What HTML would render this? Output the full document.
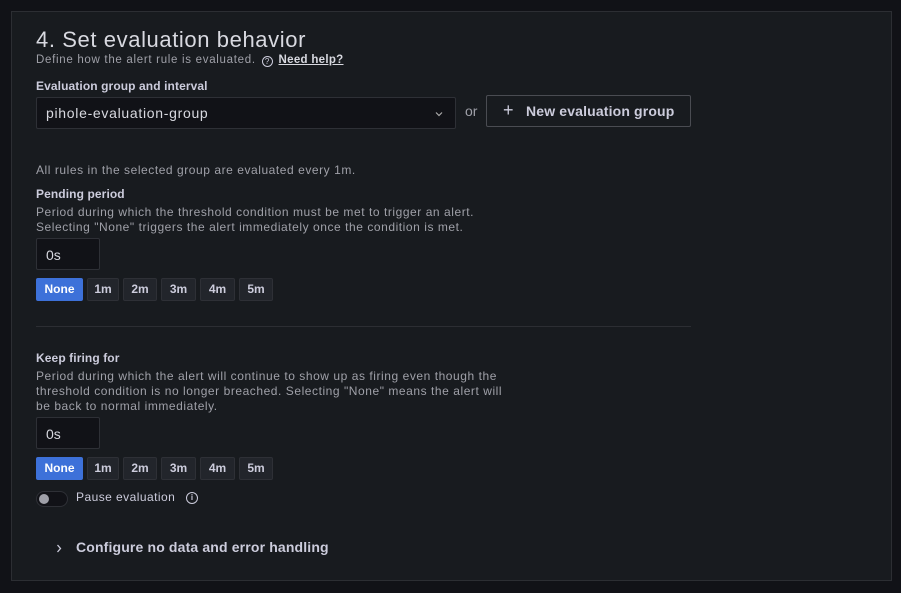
<!DOCTYPE html>
<html><head><style>
body{margin:0;width:901px;height:593px;background:#111217;font-family:"Liberation Sans",sans-serif;color:#ccccdc;overflow:hidden;position:relative}
.panel{position:absolute;left:11px;top:11px;width:879px;height:568px;background:#181b1f;border:1px solid #2c2e33}
.a{position:absolute;white-space:nowrap}
.sec{color:#9fa0a8;font-size:12px;letter-spacing:0.55px}
.lbl{font-size:12px;font-weight:bold;color:#ccccdc;letter-spacing:0.1px}
.inp{position:absolute;background:#111217;border:1px solid #2e3036;border-radius:2px;box-sizing:border-box}
.btn{position:absolute;height:23px;background:#22252b;border:1px solid #2e3036;border-radius:2px;box-sizing:border-box;font-size:12px;font-weight:bold;color:#ccccdc;text-align:center;line-height:21px}
.btn.on{background:#3d71d9;border-color:#3d71d9;color:#fff}
</style></head><body>
<div class="panel"></div>
<div class="a" style="left:36px;top:27px;font-size:22px;color:#d8d9e0;letter-spacing:0.6px">4. Set evaluation behavior</div>
<div class="a sec" style="left:36px;top:54px;font-size:11.5px;letter-spacing:0.7px">Define how the alert rule is evaluated. <span style="display:inline-block;width:9px;height:9px;border:1.3px solid #ccccdc;border-radius:50%;font-size:8px;line-height:9px;text-align:center;color:#ccccdc;vertical-align:-1px;margin:0 2px;letter-spacing:0">?</span> <span style="color:#d8d9e0;text-decoration:underline;font-weight:bold;letter-spacing:0.3px">Need help?</span></div>
<div class="a lbl" style="left:36px;top:79px">Evaluation group and interval</div>
<div class="inp" style="left:36px;top:97px;width:420px;height:32px"><span class="a" style="left:9px;top:7px;font-size:14px;color:#d8d9e0;letter-spacing:0.7px">pihole-evaluation-group</span><svg class="a" style="left:398px;top:13px" width="8" height="6" viewBox="0 0 8 6"><path d="M1 1.5L4 4.5L7 1.5" stroke="#aaa" stroke-width="1.2" fill="none"/></svg></div>
<div class="a" style="left:465px;top:103px;font-size:14px;color:#9fa0a8">or</div>
<div class="a" style="left:486px;top:95px;width:205px;height:32px;border:1px solid #4a4c52;border-radius:2px;box-sizing:border-box;background:#181b1f"><span class="a" style="left:16px;top:4px;font-size:18px;color:#ccccdc">+</span><span class="a" style="left:39px;top:7px;font-size:14px;font-weight:bold;color:#ccccdc;letter-spacing:0.15px">New evaluation group</span></div>
<div class="a sec" style="left:36px;top:163px">All rules in the selected group are evaluated every 1m.</div>
<div class="a lbl" style="left:36px;top:187px">Pending period</div>
<div class="a sec" style="left:36px;top:205px;line-height:15px">Period during which the threshold condition must be met to trigger an alert.<br>Selecting "None" triggers the alert immediately once the condition is met.</div>
<div class="inp" style="left:36px;top:238px;width:64px;height:32px"><span class="a" style="left:9px;top:8px;font-size:14px;color:#d8d9e0">0s</span></div>
<div class="btn on" style="left:36px;top:278px;width:47px">None</div>
<div class="btn" style="left:87px;top:278px;width:32px">1m</div>
<div class="btn" style="left:123px;top:278px;width:34px">2m</div>
<div class="btn" style="left:161px;top:278px;width:35px">3m</div>
<div class="btn" style="left:200px;top:278px;width:35px">4m</div>
<div class="btn" style="left:239px;top:278px;width:34px">5m</div>
<div class="a" style="left:36px;top:326px;width:655px;height:1px;background:#2c2e33"></div>
<div class="a lbl" style="left:36px;top:351px">Keep firing for</div>
<div class="a sec" style="left:36px;top:369px;line-height:15px">Period during which the alert will continue to show up as firing even though the<br>threshold condition is no longer breached. Selecting "None" means the alert will<br>be back to normal immediately.</div>
<div class="inp" style="left:36px;top:417px;width:64px;height:32px"><span class="a" style="left:9px;top:8px;font-size:14px;color:#d8d9e0">0s</span></div>
<div class="btn on" style="left:36px;top:457px;width:47px">None</div>
<div class="btn" style="left:87px;top:457px;width:32px">1m</div>
<div class="btn" style="left:123px;top:457px;width:34px">2m</div>
<div class="btn" style="left:161px;top:457px;width:35px">3m</div>
<div class="btn" style="left:200px;top:457px;width:35px">4m</div>
<div class="btn" style="left:239px;top:457px;width:34px">5m</div>
<div class="a" style="left:36px;top:491px;width:32px;height:16px;border:1px solid #2e3036;border-radius:9px;background:#111217;box-sizing:border-box"><div class="a" style="left:2px;top:2px;width:10px;height:10px;border-radius:50%;background:#9fa0a8"></div></div>
<div class="a" style="left:76px;top:490px;font-size:12px;color:#ccccdc;letter-spacing:0.45px">Pause evaluation</div>
<div class="a" style="left:186px;top:492px;width:10px;height:10px;border:1.3px solid #ccccdc;border-radius:50%;font-size:8px;line-height:10px;text-align:center;font-weight:bold">i</div>
<svg class="a" style="left:56px;top:544px" width="6" height="9" viewBox="0 0 6 9"><path d="M1.5 1L4.5 4.5L1.5 8" stroke="#ccccdc" stroke-width="1.3" fill="none"/></svg>
<div class="a" style="left:76px;top:539px;font-size:14px;font-weight:bold;color:#ccccdc;letter-spacing:0.15px">Configure no data and error handling</div>
</body></html>
